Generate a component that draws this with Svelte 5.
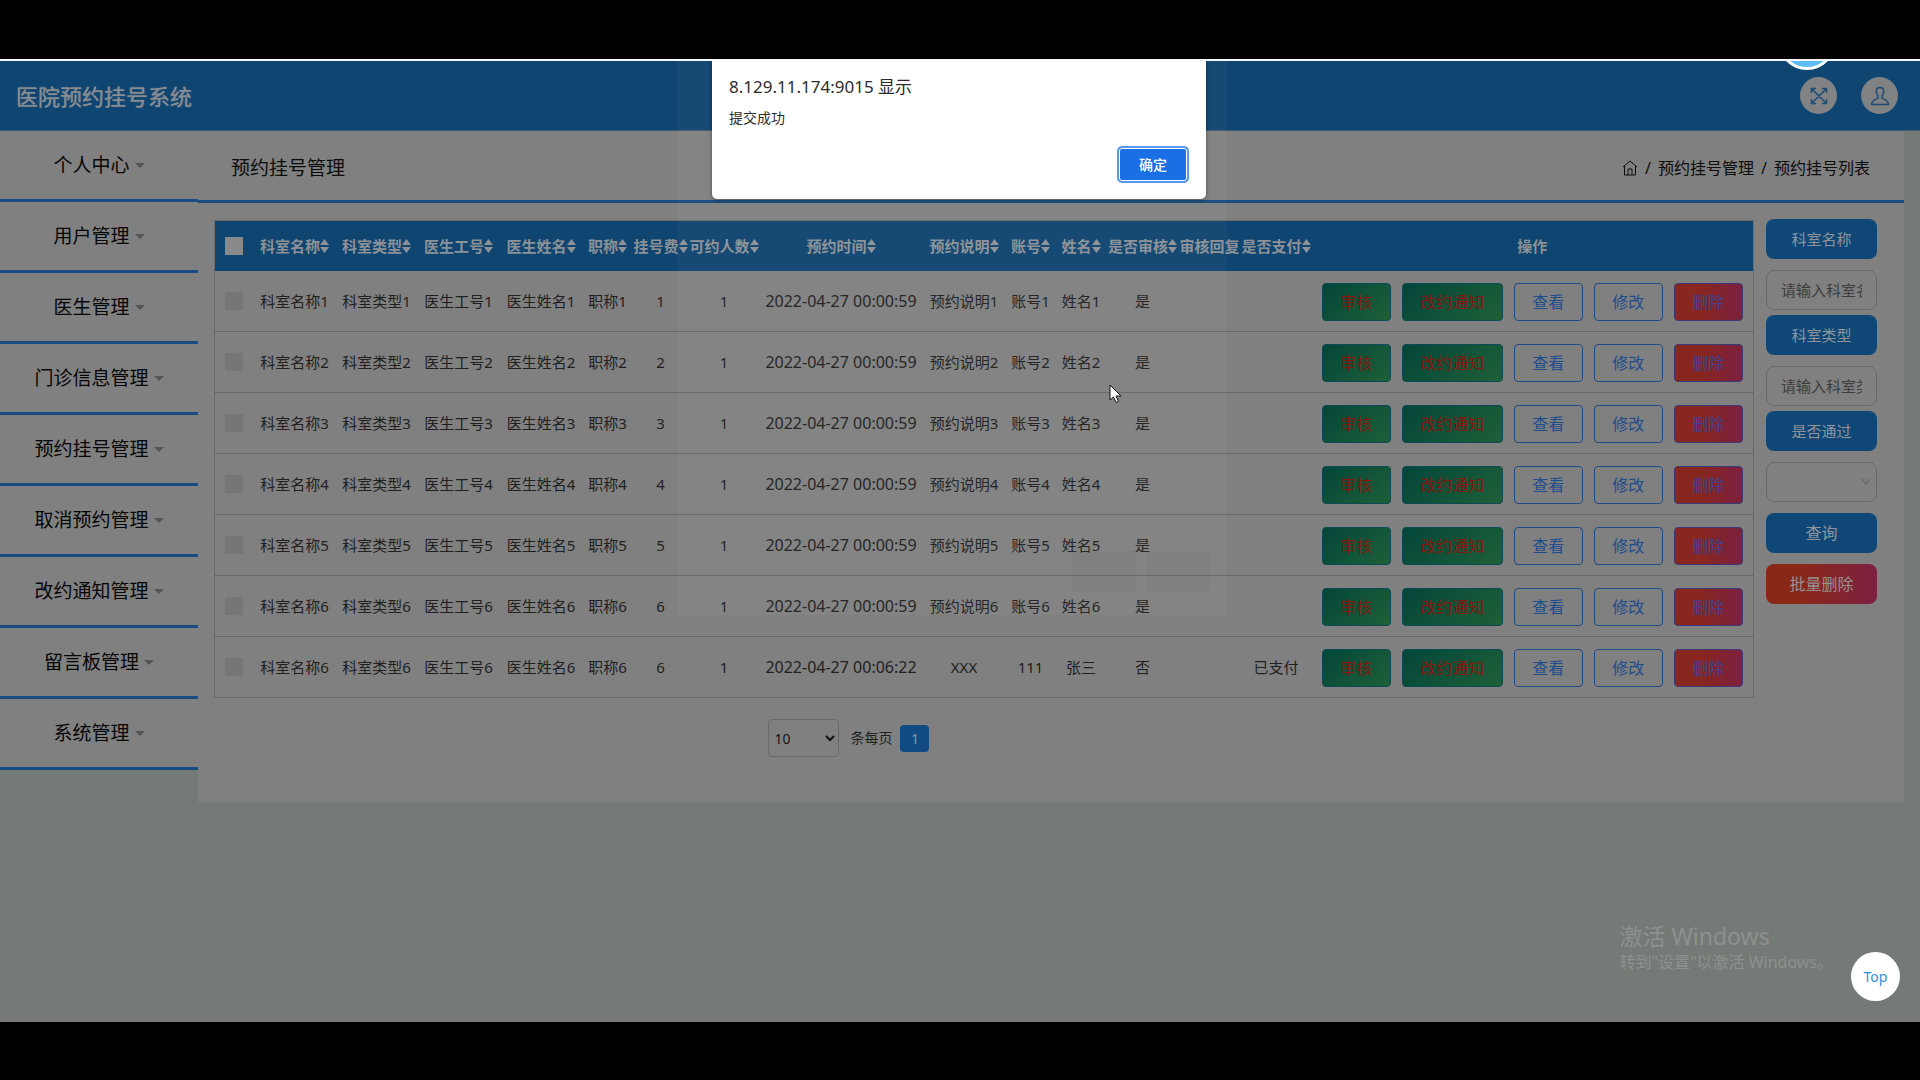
<script>
	const menu = [
		"个人中心",
		"用户管理",
		"医生管理",
		"门诊信息管理",
		"预约挂号管理",
		"取消预约管理",
		"改约通知管理",
		"留言板管理",
		"系统管理"
	];

	const columns = [
		{ key: "keshi", label: "科室名称", width: 82, sort: true },
		{ key: "leixing", label: "科室类型", width: 82, sort: true },
		{ key: "gonghao", label: "医生工号", width: 82, sort: true },
		{ key: "yisheng", label: "医生姓名", width: 83, sort: true },
		{ key: "zhicheng", label: "职称", width: 50, sort: true },
		{ key: "feiyong", label: "挂号费", width: 56, sort: true },
		{ key: "renshu", label: "可约人数", width: 71, sort: true },
		{ key: "shijian", label: "预约时间", width: 163, sort: true },
		{ key: "shuoming", label: "预约说明", width: 83, sort: true },
		{ key: "zhanghao", label: "账号", width: 50, sort: true },
		{ key: "xingming", label: "姓名", width: 51, sort: true },
		{ key: "shenhe", label: "是否审核", width: 72, sort: true },
		{ key: "huifu", label: "审核回复", width: 62, sort: false },
		{ key: "zhifu", label: "是否支付", width: 71, sort: true }
	];

	function makeRow(n) {
		return {
			keshi: "科室名称" + n,
			leixing: "科室类型" + n,
			gonghao: "医生工号" + n,
			yisheng: "医生姓名" + n,
			zhicheng: "职称" + n,
			feiyong: n,
			renshu: 1,
			shijian: "2022-04-27 00:00:59",
			shuoming: "预约说明" + n,
			zhanghao: "账号" + n,
			xingming: "姓名" + n,
			shenhe: "是",
			huifu: "",
			zhifu: ""
		};
	}

	const rows = [1, 2, 3, 4, 5, 6].map(makeRow);
	rows.push({
		...makeRow(6),
		shijian: "2022-04-27 00:06:22",
		shuoming: "XXX",
		zhanghao: "111",
		xingming: "张三",
		shenhe: "否",
		zhifu: "已支付"
	});

	let pageSize = $state("10");
</script>

<div class="stage">
	<div class="screen">
		<header class="topbar">
			<h1>医院预约挂号系统</h1>
			<div class="tools">
				<button class="round" aria-label="全屏">
					<svg viewBox="0 0 18 18" width="18" height="18">
						<path d="M1.500 1.500L16.500 16.500M16.500 1.500L1.500 16.500M1.500 6V1.500H6M12 1.500H16.500V6M16.500 12V16.500H12M6 16.500H1.500V12" />
					</svg>
				</button>
				<button class="round" aria-label="用户">
					<svg viewBox="0 0 20 20" width="20" height="20">
						<path d="M10 1.500C7.500 1.500 6.300 3.300 6.300 5.600C6.300 7.400 7 9 8 10V12.200C6 13.300 1.500 14 1.500 18.500H18.500C18.500 14 14 13.300 12 12.200V10C13 9 13.700 7.400 13.700 5.600C13.700 3.300 12.500 1.500 10 1.500Z" />
					</svg>
				</button>
			</div>
		</header>

		<div class="body">
			<nav class="sidebar">
				{#each menu as item}
				<a href="#menu">{item}<span class="caret"></span></a>
				{/each}
			</nav>

			<main>
				<div class="crumbs">
					<h2>预约挂号管理</h2>
					<div class="path">
						<a href="#home" aria-label="首页">
							<svg viewBox="0 0 16 16" width="16" height="16">
								<path d="M1 7L8 1L15 7M2.500 6V15H13.500V6M6 15V9H10V15" />
							</svg>
						</a>
						<span>/</span>
						<span>预约挂号管理</span>
						<span>/</span>
						<span>预约挂号列表</span>
					</div>
				</div>

				<div class="content">
					<div class="list">
						<table>
							<colgroup>
								<col style:width="39px" />
								{#each columns as c}
								<col style:width="{c.width}px" />
								{/each}
								<col />
							</colgroup>
							<thead>
								<tr>
									<th><input type="checkbox" aria-label="全选" /></th>
									{#each columns as c}
									<th>
										<span class="head">{c.label}{#if c.sort}<svg class="sort" viewBox="0 0 9 14" width="9" height="14"><path d="M0 6L4.500 0L9 6ZM0 8H9L4.500 14Z" /></svg>{/if}</span>
									</th>
									{/each}
									<th>操作</th>
								</tr>
							</thead>
							<tbody>
								{#each rows as row}
								<tr>
									<td><input type="checkbox" aria-label="选择" /></td>
									{#each columns as c}
									<td class:time={c.key == "shijian"}>{row[c.key]}</td>
									{/each}
									<td>
										<div class="actions">
											<button class="green">审核</button>
											<button class="green wide">改约通知</button>
											<button>查看</button>
											<button>修改</button>
											<button class="red">删除</button>
										</div>
									</td>
								</tr>
								{/each}
							</tbody>
						</table>

						<div class="pager">
							<select id="size" bind:value={pageSize}>
								<option>10</option>
								<option>25</option>
								<option>50</option>
							</select>
							<label for="size">条每页</label>
							<a href="#page">1</a>
						</div>
					</div>

					<form class="filters">
						<div class="field">
							<label for="f-name">科室名称</label>
							<input id="f-name" placeholder="请输入科室名称" />
						</div>
						<div class="field">
							<label for="f-type">科室类型</label>
							<input id="f-type" placeholder="请输入科室类型" />
						</div>
						<div class="field">
							<label for="f-pass">是否通过</label>
							<div class="drop">
								<select id="f-pass"><option></option><option>是</option><option>否</option></select>
								<svg viewBox="0 0 10 8" width="10" height="8"><path d="M1 1L5 6L9 1" /></svg>
							</div>
						</div>
						<div class="submit">
							<button type="button">查询</button>
							<button type="button" class="red">批量删除</button>
						</div>
					</form>
				</div>
			</main>
		</div>

		<!-- add form fading out behind the alert -->
		<div class="fading">
			<span></span><span></span>
		</div>
		<div class="bubble"></div>

		<div class="alert" role="alertdialog" aria-labelledby="alert-title">
			<h3 id="alert-title">8.129.11.174:9015 显示</h3>
			<p>提交成功</p>
			<button>确定</button>
		</div>

		<div class="watermark">
			<p class="big">激活 Windows</p>
			<p>转到"设置"以激活 Windows。</p>
		</div>
		<a class="top" href="#top">Top</a>

		<svg class="cursor" viewBox="0 0 14 20" width="14" height="20">
			<path d="M1 1V16L4.500 13L7 18.500L9.500 17.500L7 12H12Z" />
		</svg>
	</div>
</div>

<style>
	:global(body) {
		margin: 0;
		background: #000;
	}
	.stage {
		box-sizing: border-box;
		min-height: 100vh;
		padding: 59px 0 58px;
		display: flex;
		flex-direction: column;
		background: #000;
		color: #202020;
		font: 15px/20px "Noto Sans", "Noto Sans CJK SC", sans-serif;
	}
	.stage * {
		box-sizing: border-box;
	}
	.screen {
		flex: 1;
		position: relative;
		overflow: hidden;
		background: #747a76;
		border-top: 2px solid #f4f8fb;
		border-bottom: 9px solid #78797a;
	}
	h1, h2, h3, p {
		margin: 0;
		font-weight: normal;
	}
	a {
		color: inherit;
		text-decoration: none;
	}
	button, input, select {
		font: inherit;
		color: inherit;
		margin: 0;
	}
	svg {
		fill: none;
		stroke: currentColor;
		display: block;
	}

	.topbar {
		height: 70px;
		padding: 0 22px 0 16px;
		display: flex;
		align-items: center;
		justify-content: space-between;
		background: #0f4571;
		border-bottom: 1px solid #3e5c75;
	}
	h1 {
		font-size: 22px;
		line-height: 30px;
		color: #878d92;
		text-shadow: 0 0 1px #878d92;
	}
	.tools {
		display: flex;
		gap: 24px;
	}
	.round {
		width: 37px;
		height: 37px;
		padding: 0;
		border: 0;
		border-radius: 50%;
		background: #808284;
		color: #1c4c76;
		display: grid;
		place-items: center;
	}
	.round svg {
		stroke-width: 1.5;
	}

	.body {
		display: flex;
		align-items: flex-start;
		padding-right: 16px;
	}
	.sidebar {
		flex: 0 0 198px;
	}
	.sidebar a {
		height: 71px;
		display: flex;
		align-items: center;
		justify-content: center;
		gap: 5px;
		background: #808080;
		border-bottom: 3px solid #184c80;
		color: #060606;
		font-size: 19px;
	}
	.caret {
		border: 5px solid transparent;
		border-top-color: #555;
		border-bottom: 0;
	}
	main {
		flex: 1;
		min-width: 0;
		padding-bottom: 45px;
		background: #808080;
	}
	.crumbs {
		height: 72px;
		padding: 4px 34px 0 33px;
		display: flex;
		align-items: center;
		justify-content: space-between;
		border-bottom: 3px solid #184c80;
		color: #0c0c0c;
	}
	h2 {
		font-size: 19px;
		line-height: 24px;
	}
	.path {
		display: flex;
		align-items: center;
		gap: 7px;
		font-size: 16px;
	}

	.content {
		display: flex;
		gap: 12px;
		padding: 17px 27px 0 16px;
	}
	.list {
		flex: 1;
		min-width: 0;
	}
	table {
		width: 100%;
		table-layout: fixed;
		border-collapse: collapse;
		border: 1px solid #6a6a6a;
		text-align: center;
		white-space: nowrap;
	}
	th, td {
		padding: 0;
	}
	th {
		height: 50px;
		background: #0f4571;
		color: #8b9196;
	}
	td {
		height: 61px;
		border-bottom: 1px solid #676767;
	}
	.time {
		font-size: 16px;
	}
	.head {
		display: flex;
		align-items: center;
		justify-content: center;
	}
	.sort {
		flex: none;
		fill: currentColor;
		stroke: none;
	}
	table input {
		appearance: none;
		width: 18px;
		height: 18px;
		display: block;
		margin: 0 auto 0 10px;
		background: #747678;
	}
	th input {
		background: #87898b;
	}
	.actions {
		display: flex;
		justify-content: center;
		gap: 11px;
		padding-top: 2px;
	}
	.actions button {
		width: 69px;
		height: 38px;
		padding: 0;
		border: 1px solid #1d4c85;
		border-radius: 4px;
		background: none;
		color: #1f4d8c;
		font-size: 16px;
	}
	.actions .wide {
		width: 101px;
	}
	.actions .green {
		background: linear-gradient(135deg, #02463a, #1e6038);
		border-color: #0e4a55;
		color: #80190e;
	}
	.actions .red {
		background: linear-gradient(90deg, #882620 40%, #7b2040);
		border-color: #3b3a78;
		color: #41408c;
	}

	.pager {
		display: flex;
		align-items: center;
		margin: 21px 0 0 36%;
		font-size: 14px;
	}
	.pager select {
		width: 71px;
		height: 38px;
		padding: 0 0 0 1px;
		border: 1px solid #6a6a6a;
		border-radius: 4px;
		background: #808080;
		color: #141414;
	}
	.pager label {
		margin: 0 8px 0 11px;
	}
	.pager a {
		width: 29px;
		height: 27px;
		line-height: 27px;
		border-radius: 4px;
		background: #124b84;
		color: #8f959b;
		text-align: center;
	}

	.filters {
		flex: 0 0 111px;
		margin-top: -1px;
		display: flex;
		flex-direction: column;
		gap: 5px;
	}
	.field, .submit {
		display: flex;
		flex-direction: column;
		gap: 11px;
	}
	.submit {
		margin-top: 6px;
	}
	.field label, .submit button {
		height: 40px;
		line-height: 40px;
		padding: 0;
		border: 0;
		border-radius: 8px;
		background: #0f4876;
		color: #8f959a;
		text-align: center;
	}
	.submit button {
		font-size: 16px;
	}
	.submit .red {
		background: linear-gradient(90deg, #8a2818 30%, #7d2042);
		color: #979090;
	}
	.field input, .field select {
		width: 100%;
		height: 40px;
		padding: 0 14px;
		border: 1px solid #696969;
		border-radius: 8px;
		background: none;
	}
	.field input::placeholder {
		color: #3d3d3d;
		opacity: 1;
	}
	.drop {
		display: grid;
		align-items: center;
	}
	.drop select {
		appearance: none;
		grid-area: 1 / 1;
	}
	.drop svg {
		grid-area: 1 / 1;
		justify-self: end;
		margin-right: 6px;
		color: #5c5c5c;
		pointer-events: none;
	}

	.fading {
		position: absolute;
		top: 0;
		left: 50%;
		width: 550px;
		height: 554px;
		margin-left: -283px;
		padding: 0 17px 24px;
		display: flex;
		justify-content: flex-end;
		align-items: flex-end;
		gap: 10px;
		background: rgba(255, 255, 255, .03);
		pointer-events: none;
	}
	.fading span {
		width: 64px;
		height: 40px;
		background: rgba(70, 100, 90, .07);
	}
	.bubble {
		position: absolute;
		top: -49px;
		right: 84px;
		width: 58px;
		height: 58px;
		border: 3px solid #fff;
		border-radius: 50%;
		background: #5dbcf3;
	}
	.alert {
		position: absolute;
		top: -2px;
		left: 50%;
		width: 494px;
		margin-left: -248px;
		padding: 16px 17px;
		display: flex;
		flex-direction: column;
		border-radius: 0 0 5px 5px;
		background: #fff;
		color: #2c2c2c;
		box-shadow: 0 1px 4px rgba(0, 0, 0, .4);
		font-size: 14px;
	}
	.alert h3 {
		font-size: 17px;
		line-height: 24px;
	}
	.alert p {
		margin: 9px 0 18px;
	}
	.alert button {
		align-self: flex-end;
		width: 72px;
		height: 37px;
		padding: 0;
		border: 2px solid #5c97ee;
		border-radius: 5px;
		background: #1a6fe4;
		box-shadow: inset 0 0 0 1px #fff;
		color: #fff;
		font-weight: 500;
	}
	.watermark {
		position: absolute;
		right: 87px;
		bottom: 39px;
		color: #8d918f;
		font-size: 16px;
		line-height: 24px;
		pointer-events: none;
	}
	.watermark .big {
		font-size: 23px;
		line-height: 28px;
	}
	.top {
		position: absolute;
		right: 20px;
		bottom: 12px;
		width: 49px;
		height: 49px;
		line-height: 49px;
		border-radius: 50%;
		background: #fff;
		color: #3390d8;
		font-size: 14px;
		text-align: center;
	}
	.cursor {
		position: absolute;
		left: 1109px;
		top: 323px;
		fill: #fff;
		stroke: #111;
	}
</style>
